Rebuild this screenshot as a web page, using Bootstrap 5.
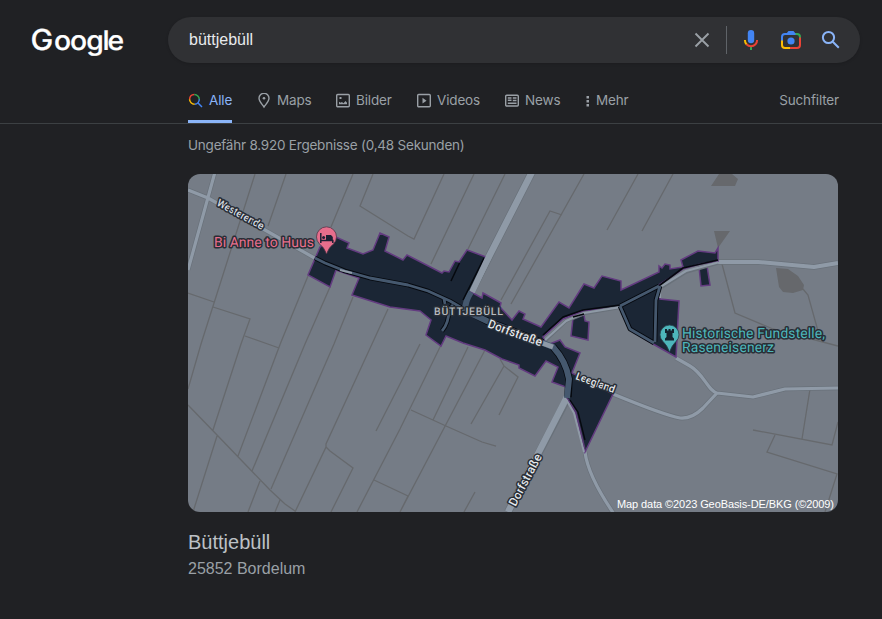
<!DOCTYPE html>
<html lang="de" data-bs-theme="dark">
<head>
<meta charset="utf-8">
<meta name="viewport" content="width=device-width, initial-scale=1">
<title>büttjebüll – Google Suche</title>
<link href="https://cdn.jsdelivr.net/npm/bootstrap@5.3.0/dist/css/bootstrap.min.css" rel="stylesheet">
<style>
body{background:#202124;color:#9aa0a6;font-family:"Liberation Sans",Arial,sans-serif;height:619px;overflow:hidden}
svg{display:block;flex:none}
.top-bar{height:80px;padding:17px 22px 0 32px}
.brand{width:136px;height:46px;overflow:visible}
.brand text{font:500 27px Inter,sans-serif;fill:#fff;stroke:#fff;stroke-width:.2px;text-rendering:geometricPrecision}
.brand .cap{font-size:29px}
.search-box{height:46px;background:#303134;border-radius:23px;padding:0 18px 0 21px;box-shadow:0 1px 3px rgba(0,0,0,.15)}
.query{color:#e8eaed;font-size:16px}
.sep{width:1px;height:28px;background:#5f6368;margin:0 12px 0 16px}
.find-icon{margin-left:17px}
.tabs{height:44px;padding:0 43px 0 188px;border-bottom:1px solid #3c4043;font:13.5px/20px "Google Sans",Inter,sans-serif;letter-spacing:-.15px}
.tab{height:43px;padding-top:10px;color:#9aa0a6;text-decoration:none;display:flex;white-space:nowrap}
.tab svg{margin:3px 5px 0 0}
.tab.on{color:#8ab4f8;border-bottom:3px solid #8ab4f8;width:44px;margin-right:25px}
.w-maps{width:79px}.w-bilder{width:81px}.w-videos{width:88px}.w-news{width:79px}
.results{padding:11px 44px 0 188px}
.stats{font:13.5px/20px "Google Sans",Inter,sans-serif;letter-spacing:-.22px;margin-bottom:19px}
.map-view{width:650px;height:338px;border-radius:12px;overflow:hidden}
.plot{fill:none;stroke:#66696d;stroke-width:1.3}
.way{fill:none;stroke:#8f9aa7;stroke-linejoin:round}
.case{fill:none;stroke:#69717a;stroke-linejoin:round}
.inner{fill:none;stroke:#45586e;stroke-linejoin:round}
.edge{fill:none;stroke:#05080e;stroke-linejoin:round}
.label{font-family:Roboto,sans-serif;paint-order:stroke;stroke-linejoin:round;stroke-width:3px;stroke:#292e36;text-rendering:geometricPrecision}
.place{font-size:20px;line-height:26px;color:#bdc1c6;margin-top:17px}
.town{font-size:16px;line-height:24px;margin-top:2px}
</style>
<script src="https://cdn.jsdelivr.net/npm/bootstrap@5.3.0/dist/js/bootstrap.bundle.min.js"></script>
</head>
<body>
<header>
  <div class="top-bar d-flex">
    <svg class="brand" viewBox="0 0 136 46"><text transform="scale(1.05 1)" y="33"><tspan class="cap" x="-1.500">G</tspan><tspan x="20.900 36.200 51.600 67.200 71.800">oogle</tspan></text></svg>
    <div class="search-box d-flex align-items-center flex-grow-1">
      <span class="query flex-grow-1">büttjebüll</span>
      <svg width="16" height="16" viewBox="0 0 16 16" stroke="#9aa0a6" stroke-width="1.9"><path d="M1.5 1.5l13 13M14.5 1.5l-13 13"/></svg>
      <span class="sep"></span>
      <svg width="24" height="24" viewBox="0 0 24 24"><rect x="8.8" y="2" width="6.4" height="13.2" rx="3.2" fill="#4285f4"/><path fill="#34a853" d="M11 18h2v4h-2z"/><path d="M5.9 12c0 2 .7 3.5 1.8 4.6" stroke="#fbbc04" stroke-width="2" fill="none"/><path d="M7.5 16.3c2.5 2.7 6.5 2.7 9 0 1.1-1.2 1.6-2.5 1.6-4.3" stroke="#ea4335" stroke-width="2" fill="none"/></svg>
      <svg class="ms-3" width="24" height="24" viewBox="0 0 24 24" fill="none" stroke-width="2"><path stroke="#4285f4" d="M3 13V9q0-3 3-3h11"/><path d="M7.500 5.500L9.500 3h5l2 2.500z" fill="#4285f4"/><path stroke="#34a853" d="M16.500 6H18q3 0 3 3v1"/><path stroke="#ea4335" d="M21 9.500V17q0 3-3 3h-7"/><path stroke="#fbbc04" d="M3 12.500V17q0 3 3 3h5"/><circle cx="12" cy="13" r="3.600" fill="#4285f4"/></svg>
      <svg class="find-icon" width="22" height="24" viewBox="1 0 22 24" fill="none" stroke="#8ab4f8" stroke-width="2"><circle cx="9.5" cy="9.5" r="5.6"/><path d="M13.8 13.8l6 6"/></svg>
    </div>
  </div>
  <nav class="tabs d-flex">
    <a class="tab on" href="#"><svg width="16" height="16" viewBox="0 0 16 16" fill="none" stroke-width="1.500"><path stroke="#ea4335" d="M1.600 6.300A5 5 0 0 1 6.300 1.600"/><path stroke="#34a853" d="M6.300 1.600a5 5 0 0 1 5 5"/><path stroke="#4285f4" d="M11.300 6.300A5 5 0 0 1 6.500 11.300M9.800 9.800l4.200 4.200"/><path stroke="#fbbc04" d="M1.600 6.300a5 5 0 0 0 5 5"/></svg>Alle</a>
    <a class="tab w-maps" href="#"><svg width="15" height="16" viewBox="0.500 0.500 15 16" fill="none" stroke="#9aa0a6" stroke-width="1.400"><path d="M7.500 14.500C5 11 2.500 8.700 2.500 5.800a5 5 0 0 1 10 0C12.500 8.700 10 11 7.500 14.500z"/><circle cx="7.500" cy="5.700" r="1.300" fill="#9aa0a6" stroke="none"/></svg>Maps</a>
    <a class="tab w-bilder" href="#"><svg width="15" height="16" viewBox="0.500 0.500 15 16"><rect x="1.200" y="2" width="12.600" height="12.200" rx="1" fill="none" stroke="#9aa0a6" stroke-width="1.400"/><path fill="#9aa0a6" d="M3.500 11.800V9.300l1.700 1 1.200-.8L8 10.800l2-2.300 1.500 1.800v1.500zM4 4.500h2v2H4z"/></svg>Bilder</a>
    <a class="tab w-videos" href="#"><svg width="15" height="16" viewBox="0.500 0.500 15 16"><rect x="1.200" y="2" width="12.600" height="12.200" rx="1" fill="none" stroke="#9aa0a6" stroke-width="1.400"/><path fill="#9aa0a6" d="M6 5.300L10 8.200 6 11z"/></svg>Videos</a>
    <a class="tab w-news" href="#"><svg width="15" height="16" viewBox="0.500 0.500 15 16" fill="none" stroke="#9aa0a6" stroke-width="1.400"><rect x="1.200" y="2.700" width="12.600" height="10.800" rx="1"/><path d="M3.300 5.500H7M3.300 7.700H7M8.300 5.500H12M8.300 8H12M3.300 10.700H12"/></svg>News</a>
    <a class="tab" href="#"><svg width="7" height="16" viewBox="0 0 7 16" fill="#9aa0a6"><path d="M2.500 3H5v2.500H2.500zM2.500 7H5v2.500H2.500zM2.500 11H5v2.500H2.500z"/></svg>Mehr</a>
    <a class="tab ms-auto" href="#">Suchfilter</a>
  </nav>
</header>
<main class="results">
  <div class="stats"><span>Ungefähr 8.920 Ergebnisse (0,48 Sekunden)</span></div>
  <div class="map-view">
    <svg width="650" height="338" viewBox="188 174 650 338">
      <rect x="188" y="174" width="650" height="338" fill="#757c86"/>
      <!-- field boundaries -->
      <g class="plot">
        <path d="M255 174L201 344 188 389M286 174L268 226M353 174L331 227M373 174L360 206 408 236 414 239 444 174M474 174L431 264M505 174L468 249M584 174L511 304M562 215L550 211 501 300M638 174L607 230M673 174L642 231"/>
        <path d="M188 293L214 302M213 307L250 319 241 344 213 430M245 336L279 348M281 342L238 456M188 405L218 436 270 490 285 504 295 511M217 436L193 512M308 276L281 342M330 287L305 344 252 471M353 297L334 344 271 489M388 309L372 344 326 444V447L295 512M326 447L330 451 353 468 331 512M260 481L248 512M280 500L275 512M374 480L408 496 400 512M420 344L400 384 376 431M441 345L400 429 357 512M468 347L433 420M485 350L400 512M500 359L504 366 471 424M504 366L518 377 499 415M411 410L446 426 482 442 496 446M475 492L464 512"/>
        <path d="M722 264L735 313 773 329 838 346M803 289L808 295 818 331M753 430L832 445 838 422M810 389L802 439M775 435L767 452 837 474 825 512"/>
      </g>
      <path fill="#66686c" d="M711 186L719 174H732L738 179 735 186zM714 231H730L718 248zM776 268L788 269 798 276 804 285 803 290 793 293 783 292 779 287z"/>
      <!-- roads outside the village -->
      <g class="case"><path stroke-width="4.600" d="M188 190L208 198 265 230 318 260M676 358L690 366C704 374 708 391 717 393L753 397 785 389 838 388M717 393L703 408Q692 419 680 418 664 415 613 394M585 452Q588 476 614 514M215 172L188 270"/><path stroke-width="5.500" d="M716 262H758L814 267 838 263"/><path stroke-width="8" d="M532 172L471 292M567 399L508 512"/></g>
      <g class="way"><path stroke-width="3.200" d="M188 190L208 198 265 230 318 260M676 358L690 366C704 374 708 391 717 393L753 397 785 389 838 388M717 393L703 408Q692 419 680 418 664 415 613 394M585 452Q588 476 614 514M215 172L188 270"/><path stroke-width="4" d="M716 262H758L814 267 838 263"/><path stroke-width="6.500" d="M532 172L471 292M567 397L508 512"/></g>
      <!-- village area -->
      <g fill="#1b2635" stroke="#633b80" stroke-width="1.500">
        <path d="M320 247L336 237 349 243 347 248 363 254 373 250 380 233 389 237 385 251 403 260 407 255 442 273 444 271 449 272 455 261 459 262 467 250 486 257 471 292 482 298 483 293 501 303 500 307 512 320 519 311 525 314 523 319 541 327 559 302 569 308 584 284 594 288 602 276 621 281V290L659 272V266L662 268 665 264 670 265V269L683 267 681 260 698 251 715 253 718 248V261L700 264 683 269 659 285 660 299 679 301 676 357 653 344 630 330 620 307 583 311 563 319 543 337 547 345 560 340 565 347 580 353 572 373 613 394 585 452 576 414 567 399 566 387 552 382 558 367 546 361 535 376 519 368V365L502 359 485 350 463 343 446 336 441 346 426 335 431 320 420 311 390 307 352 295 359 278 336 270 330 287 308 275z"/>
        <path d="M573 318L584 315 585 321 589 322 588 340 571 336zM699 267L707 266 710 285 701 286z"/>
      </g>
      <path class="case" stroke-width="3.600" d="M546 340L566 321 584 313.500 622 307M662 287L686 272 718 263"/>
      <path class="way" stroke-width="2.200" d="M545 340L566 321 584 313 621 307M660 298V287L686 271 718 262.500"/>
      <path class="edge" stroke-width="4.600" d="M315 258L325 263 345 271 370 278 408 285 428 291 450 301 467 311M444 299L445 304M453 305L449 309Q449 323 442 331M620 306L630 329 654 343M660 286L656 300 655 342M620 306L659 286"/>
      <path class="edge" stroke-width="1.600" d="M543 335L563 317 583 310 620 305 660 285 683 268 718 260M573 317L584 314"/>
      <path class="inner" stroke-width="2.800" d="M315 258L325 263 345 271 370 278 408 285 428 291 450 301 467 311M444 299L445 304M453 305L449 309Q449 323 442 331M620 306L630 329 654 343M660 286L656 300 655 342M620 306L659 286"/>
      <path d="M340 270L352 273" class="way" stroke-width="2"/>
      <path class="edge" stroke-width="7.500" d="M470 312L487 321 543 343M553 347Q566 361 569 379L568 397"/>
      <path class="inner" stroke-width="6" d="M466 311L487 321 543 343 553 347Q566 361 569 379L567 398M471 292Q465 301 465 311"/>
      <path class="edge" stroke-width="1.500" d="M484 258L467 292 463 300"/>
      <path d="M489 256L472 292" class="way" stroke-width="6"/>
      <path d="M566 399L574 413 584 452" class="way" stroke-width="2"/>
      <path d="M568 399L576 412 585 449" fill="none" stroke="#563b72" stroke-width="1.300"/>
      <path d="M570 400L578 412 585 440" class="edge" stroke-width="1.300"/>
      <path d="M459.500 263L451 281M487.500 304V315" stroke="#05080e" stroke-width="1.500"/>
      <path d="M542 343L553 347" class="way" stroke-width="5"/>
      <!-- pins -->
      <path d="M326.500 254Q324 247 319.500 244A10 10 0 1 1 333.500 244Q329 247 326.500 254z" fill="#e66e8c" stroke="#513647" stroke-width=".8"/>
      <path d="M320.800 233v10M320.800 240.500h12v2.500" fill="none" stroke="#1b2033" stroke-width="1.500"/><circle cx="323.600" cy="237.500" r="1.500" fill="#1b2033"/><path d="M326 235h5l1.800 2v4H326z" fill="#1b2033"/>
      <path d="M669.500 352Q667 345 663 341.500A9.500 9.500 0 1 1 676 341.500Q672 345 669.500 352z" fill="#4db6bb" stroke="#29454f" stroke-width=".8"/>
      <path d="M665 329h2v1.500h1.500V329h2v1.500h1.500V329h2v4h-1.500v4l1.500 1.500v2h-9v-2l1.500-1.500v-4H665z" fill="#15222f"/>
      <!-- labels -->
      <g class="label">
        <text x="214" y="247" font-size="14" fill="#e66e8c" textLength="100">Bi Anne to Huus</text>
        <text x="682" y="338" font-size="14" fill="#4db6bb" textLength="143">Historische Fundstelle,</text>
        <text x="682" y="352" font-size="14" fill="#4db6bb" textLength="92">Raseneisenerz</text>
        <text x="434" y="314.500" font-size="10.500" font-weight="500" fill="#b5babf" textLength="69">BÜTTJEBÜLL</text>
        <text transform="translate(216 205) rotate(28.500)" font-size="10.500" font-weight="500" fill="#d5dae0" textLength="52">Westerende</text>
        <text transform="translate(487 327) rotate(20)" font-size="12" font-weight="500" fill="#e3e7eb" textLength="57">Dorfstraße</text>
        <text transform="translate(575 379) rotate(20)" font-size="10.500" font-weight="500" fill="#e3e7eb" textLength="41">Leegland</text>
        <text transform="translate(515.500 507) rotate(-62)" font-size="12" font-weight="500" fill="#e3e7eb" textLength="57">Dorfstraße</text>
      </g>
      <text x="617" y="508" font-family="Liberation Sans,sans-serif" font-size="11" fill="#fff" textLength="217">Map data ©2023 GeoBasis-DE/BKG (©2009)</text>
    </svg>
  </div>
  <div class="place">Büttjebüll</div>
  <div class="town">25852 Bordelum</div>
</main>
</body>
</html>
